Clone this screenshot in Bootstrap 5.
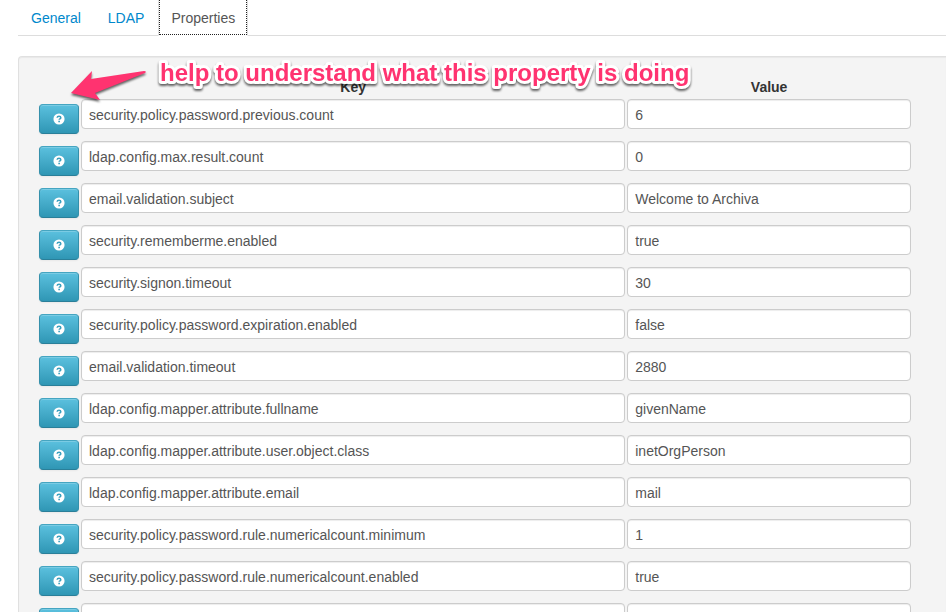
<!DOCTYPE html>
<html lang="en">
<head>
<meta charset="utf-8">
<meta name="viewport" content="width=device-width, initial-scale=1">
<title>Properties</title>
<link href="https://cdn.jsdelivr.net/npm/bootstrap@5.3.0/dist/css/bootstrap.min.css" rel="stylesheet">
<style>
  body { font: 14px/20px "Liberation Sans", Arial, sans-serif; color: #333; height: 100vh; }
  .page { padding-left: 18px; }
  .nav-tabs { --bs-nav-tabs-border-color: #ddd; margin-bottom: 20px; }
  .nav-tabs .nav-item { margin-right: 1px; }
  .nav-tabs .nav-link { padding: 8px 12px 7px; border-width: 0 1px 1px; border-radius: 0; color: #08c; }
  .nav-tabs .nav-link.active { padding: 0; color: #555; border-color: #ddd; border-bottom-color: #fff; }
  .tab-focus { padding: 8px 11px 6px; border: 1px dotted #222; border-top: 0; }
  .well { padding: 19px 34px 19px 19px; background: #f4f4f4; border: 1px solid #e0e0e0; border-right: 0; border-radius: 4px 0 0 4px; box-shadow: inset 0 1px 1px rgba(0,0,0,.05); }
  .props { width: 100%; table-layout: fixed; }
  .props th, .props td { padding: 1px; }
  .props th { text-align: center; }
  .col-help { width: 42px; }
  .col-key { width: 62.5%; }
  .props .form-control { height: 30px; margin-bottom: 10px; padding: 5px 7px 3px; font-size: 14px; line-height: 20px; color: #555; border-color: #ccc; border-radius: 4px; box-shadow: inset 0 1px 1px rgba(0,0,0,.075); }
  .btn-help { width: 40px; height: 30px; padding: 0; border: 1px solid #3793ae; border-color: #45a5c1 #3590ab #2a7f99; border-radius: 4px; background-image: linear-gradient(#5bc0de, #2f96b4); box-shadow: inset 0 1px 0 rgba(255,255,255,.2), 0 1px 2px rgba(0,0,0,.05); }
  .note { left: 0; top: 50px; pointer-events: none; filter: drop-shadow(0 2px 1px rgba(0,0,0,.6)); }
  .note text { font: bold 24px "Liberation Sans", Arial, sans-serif; fill: #ff3370; stroke: #fff; stroke-width: 6px; stroke-linejoin: round; paint-order: stroke; }
</style>
</head>
<body class="overflow-hidden position-relative">
<svg class="d-none" aria-hidden="true">
  <symbol id="help" viewBox="0 0 14 14">
    <circle cx="7" cy="7" r="6.500" fill="#fff"/>
    <path d="M4.800 5.600C4.900 4.300 5.900 3.800 7 3.800s2.100 .6 2.100 1.700c0 1.300-1.900 1.200-1.900 2.400" fill="none" stroke="#3a9fbe" stroke-width="1.800"/>
    <path d="M6.200 9h1.900v1.700H6.200z" fill="#3a9fbe"/>
  </symbol>
</svg>
<main class="page">
  <ul class="nav nav-tabs">
    <li class="nav-item"><a class="nav-link" href="#general">General</a></li>
    <li class="nav-item"><a class="nav-link" href="#ldap">LDAP</a></li>
    <li class="nav-item"><a class="nav-link active" aria-current="page" href="#properties"><span class="tab-focus d-block">Properties</span></a></li>
  </ul>
  <section class="well" id="properties">
    <table class="props">
      <colgroup><col class="col-help"><col class="col-key"><col></colgroup>
      <thead><tr><td></td><th id="key" scope="col">Key</th><th id="val" scope="col">Value</th></tr></thead>
      <tbody>
        <tr>
          <td><button type="button" class="btn btn-help d-flex align-items-center justify-content-center" aria-label="Help"><svg width="12" height="12"><use href="#help"/></svg></button></td>
          <td><input class="form-control" type="text" aria-labelledby="key" value="security.policy.password.previous.count"></td>
          <td><input class="form-control" type="text" aria-labelledby="val" value="6"></td>
        </tr>
        <tr>
          <td><button type="button" class="btn btn-help d-flex align-items-center justify-content-center" aria-label="Help"><svg width="12" height="12"><use href="#help"/></svg></button></td>
          <td><input class="form-control" type="text" aria-labelledby="key" value="ldap.config.max.result.count"></td>
          <td><input class="form-control" type="text" aria-labelledby="val" value="0"></td>
        </tr>
        <tr>
          <td><button type="button" class="btn btn-help d-flex align-items-center justify-content-center" aria-label="Help"><svg width="12" height="12"><use href="#help"/></svg></button></td>
          <td><input class="form-control" type="text" aria-labelledby="key" value="email.validation.subject"></td>
          <td><input class="form-control" type="text" aria-labelledby="val" value="Welcome to Archiva"></td>
        </tr>
        <tr>
          <td><button type="button" class="btn btn-help d-flex align-items-center justify-content-center" aria-label="Help"><svg width="12" height="12"><use href="#help"/></svg></button></td>
          <td><input class="form-control" type="text" aria-labelledby="key" value="security.rememberme.enabled"></td>
          <td><input class="form-control" type="text" aria-labelledby="val" value="true"></td>
        </tr>
        <tr>
          <td><button type="button" class="btn btn-help d-flex align-items-center justify-content-center" aria-label="Help"><svg width="12" height="12"><use href="#help"/></svg></button></td>
          <td><input class="form-control" type="text" aria-labelledby="key" value="security.signon.timeout"></td>
          <td><input class="form-control" type="text" aria-labelledby="val" value="30"></td>
        </tr>
        <tr>
          <td><button type="button" class="btn btn-help d-flex align-items-center justify-content-center" aria-label="Help"><svg width="12" height="12"><use href="#help"/></svg></button></td>
          <td><input class="form-control" type="text" aria-labelledby="key" value="security.policy.password.expiration.enabled"></td>
          <td><input class="form-control" type="text" aria-labelledby="val" value="false"></td>
        </tr>
        <tr>
          <td><button type="button" class="btn btn-help d-flex align-items-center justify-content-center" aria-label="Help"><svg width="12" height="12"><use href="#help"/></svg></button></td>
          <td><input class="form-control" type="text" aria-labelledby="key" value="email.validation.timeout"></td>
          <td><input class="form-control" type="text" aria-labelledby="val" value="2880"></td>
        </tr>
        <tr>
          <td><button type="button" class="btn btn-help d-flex align-items-center justify-content-center" aria-label="Help"><svg width="12" height="12"><use href="#help"/></svg></button></td>
          <td><input class="form-control" type="text" aria-labelledby="key" value="ldap.config.mapper.attribute.fullname"></td>
          <td><input class="form-control" type="text" aria-labelledby="val" value="givenName"></td>
        </tr>
        <tr>
          <td><button type="button" class="btn btn-help d-flex align-items-center justify-content-center" aria-label="Help"><svg width="12" height="12"><use href="#help"/></svg></button></td>
          <td><input class="form-control" type="text" aria-labelledby="key" value="ldap.config.mapper.attribute.user.object.class"></td>
          <td><input class="form-control" type="text" aria-labelledby="val" value="inetOrgPerson"></td>
        </tr>
        <tr>
          <td><button type="button" class="btn btn-help d-flex align-items-center justify-content-center" aria-label="Help"><svg width="12" height="12"><use href="#help"/></svg></button></td>
          <td><input class="form-control" type="text" aria-labelledby="key" value="ldap.config.mapper.attribute.email"></td>
          <td><input class="form-control" type="text" aria-labelledby="val" value="mail"></td>
        </tr>
        <tr>
          <td><button type="button" class="btn btn-help d-flex align-items-center justify-content-center" aria-label="Help"><svg width="12" height="12"><use href="#help"/></svg></button></td>
          <td><input class="form-control" type="text" aria-labelledby="key" value="security.policy.password.rule.numericalcount.minimum"></td>
          <td><input class="form-control" type="text" aria-labelledby="val" value="1"></td>
        </tr>
        <tr>
          <td><button type="button" class="btn btn-help d-flex align-items-center justify-content-center" aria-label="Help"><svg width="12" height="12"><use href="#help"/></svg></button></td>
          <td><input class="form-control" type="text" aria-labelledby="key" value="security.policy.password.rule.numericalcount.enabled"></td>
          <td><input class="form-control" type="text" aria-labelledby="val" value="true"></td>
        </tr>
        <tr>
          <td><button type="button" class="btn btn-help d-flex align-items-center justify-content-center" aria-label="Help"><svg width="12" height="12"><use href="#help"/></svg></button></td>
          <td><input class="form-control" type="text" aria-labelledby="key"></td>
          <td><input class="form-control" type="text" aria-labelledby="val"></td>
        </tr>
      </tbody>
    </table>
  </section>
</main>
<svg class="note position-absolute" width="720" height="60">
  <path d="M71 43 92 21 91 29 144 21Q147 21 145 23L95 43 100 50Z" fill="#ff3370"/>
  <text x="160" y="31">help to understand what this property is doing</text>
</svg>
<script src="https://cdn.jsdelivr.net/npm/bootstrap@5.3.0/dist/js/bootstrap.bundle.min.js"></script>
</body>
</html>
